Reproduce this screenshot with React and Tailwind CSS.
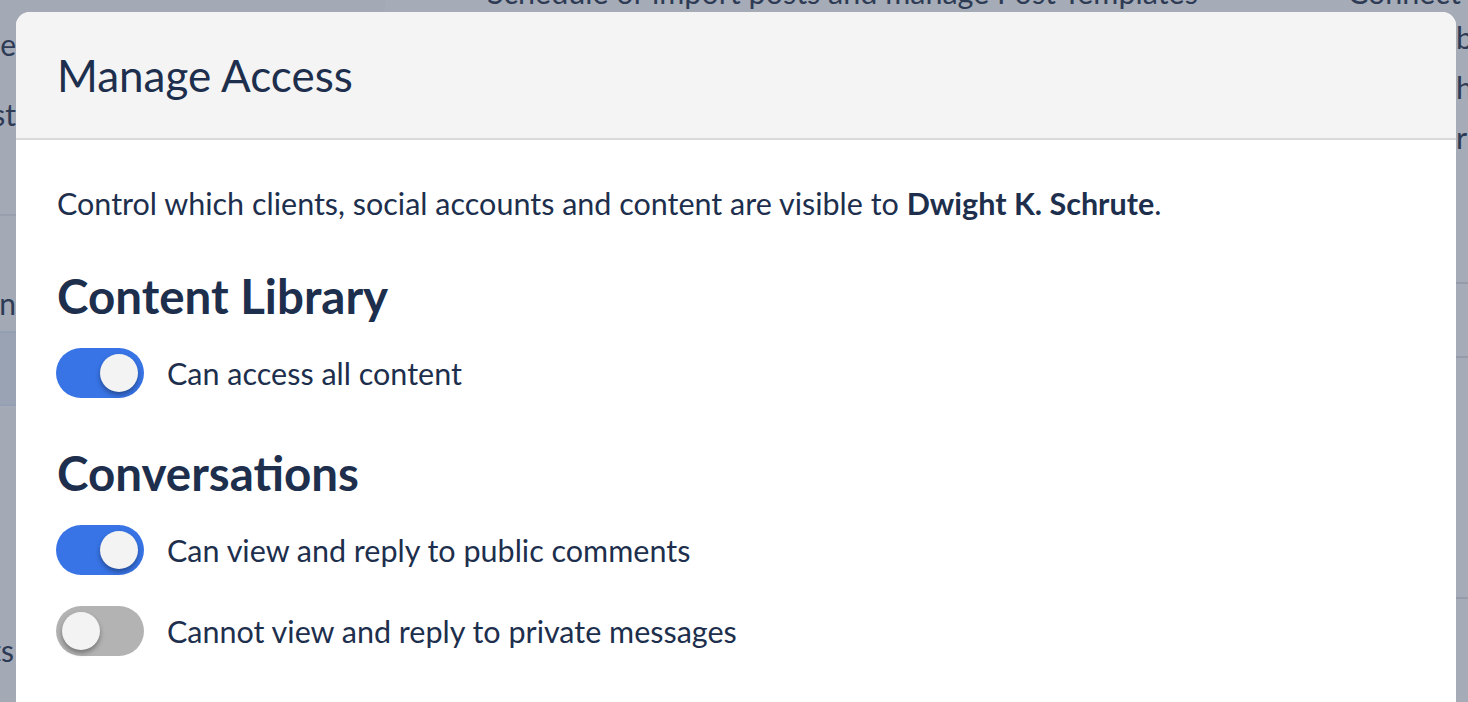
import { Check, X } from "lucide-react";

function Toggle({ on }) {
    return (
        <div
            className={
                on
                    ? "flex h-[50px] w-[88px] shrink-0 items-center justify-end rounded-full bg-[#3874e6] px-[6px]"
                    : "flex h-[50px] w-[88px] shrink-0 items-center justify-start rounded-full bg-[#b3b3b3] px-[6px]"
            }
        >
            <div className="h-[38px] w-[38px] rounded-full bg-[#f3f3f3] shadow-[0_3px_5px_rgba(0,0,0,0.35)]" />
        </div>
    );
}

function ToggleRow({ on, label }) {
    return (
        <div className="flex items-center gap-[23px]">
            <Toggle on={on} />
            <span className="text-[30.5px] leading-[40px]">{label}</span>
        </div>
    );
}

export default function App() {
    return (
        <div
            className="relative h-[702px] w-[1468px] overflow-hidden bg-[#a5abb7] text-[#1d2f4d]"
            style={{ fontFamily: "Lato, 'Open Sans', sans-serif" }}
        >
            {/* page behind the dialog */}
            <div className="flex h-full">
                <div className="flex w-[385px] flex-col bg-[#a3a9b5] text-[30px] text-[#2e3b55]">
                    <div className="flex h-[216px] flex-col border-b-2 border-[#989eab] pt-[24px]">
                        <div className="flex w-[16px] justify-end whitespace-nowrap leading-[40px]">Schedule</div>
                        <div className="mt-[30px] flex w-[16px] justify-end whitespace-nowrap leading-[40px]">Post</div>
                    </div>
                    <div className="flex h-[115px] items-end pb-[8px]">
                        <div className="flex w-[16px] justify-end whitespace-nowrap leading-[40px]">Admin</div>
                    </div>
                    <div className="h-[75px] border-y-2 border-[#959fb3] bg-[#9aa3b4]" />
                    <div className="flex flex-1 items-end pb-[32px]">
                        <div className="flex w-[14px] justify-end whitespace-nowrap leading-[40px]">Posts</div>
                    </div>
                </div>
                <div className="flex flex-1 flex-col text-[30.5px] text-[#2e3b55]">
                    <div className="-mt-[28px] flex items-center whitespace-nowrap leading-[40px]">
                        <Check className="ml-[56px] h-[26px] w-[26px] text-[#2f9e54]" strokeWidth={3} />
                        <span className="ml-[20px]">Schedule or import posts and manage Post Templates</span>
                        <X className="ml-[106px] h-[24px] w-[24px] text-[#d9443f]" strokeWidth={3} />
                        <span className="ml-[20px]">Connect</span>
                    </div>
                    <div className="flex flex-col items-end leading-[50px]">
                        <div className="flex w-[12px] justify-start whitespace-nowrap">be</div>
                        <div className="flex w-[12px] justify-start whitespace-nowrap">ha</div>
                        <div className="flex w-[12px] justify-start whitespace-nowrap">ri</div>
                    </div>
                    <div className="h-[122px] border-b-2 border-[#959ba8]" />
                    <div className="h-[74px] border-b-2 border-[#959ba8]" />
                    <div className="h-[241px] border-b-2 border-[#959ba8]" />
                </div>
            </div>

            {/* dialog */}
            <div className="absolute left-4 top-3 w-[1440px] overflow-hidden rounded-t-[14px] bg-white">
                <div className="flex h-[128px] items-center border-b-2 border-[#dadada] bg-[#f4f4f4] px-[41px]">
                    <h1 className="text-[44px] leading-[52px]">Manage Access</h1>
                </div>
                <div className="flex flex-col px-[40px] pb-[60px] pt-[43px]">
                    <p className="pl-px text-[30.5px] leading-[40px]">
                        Control which clients, social accounts and content are visible to{" "}
                        <span className="font-bold">Dwight K. Schrute</span>.
                    </p>
                    <h2 className="mt-[45px] pl-px text-[47.5px] font-bold leading-[56px]">Content Library</h2>
                    <div className="mt-[24px]">
                        <ToggleRow on label="Can access all content" />
                    </div>
                    <h2 className="mt-[47px] pl-px text-[47.5px] font-bold leading-[56px]">Conversations</h2>
                    <div className="mt-[24px] flex flex-col gap-[31px]">
                        <ToggleRow on label="Can view and reply to public comments" />
                        <ToggleRow on={false} label="Cannot view and reply to private messages" />
                    </div>
                </div>
            </div>
        </div>
    );
}
